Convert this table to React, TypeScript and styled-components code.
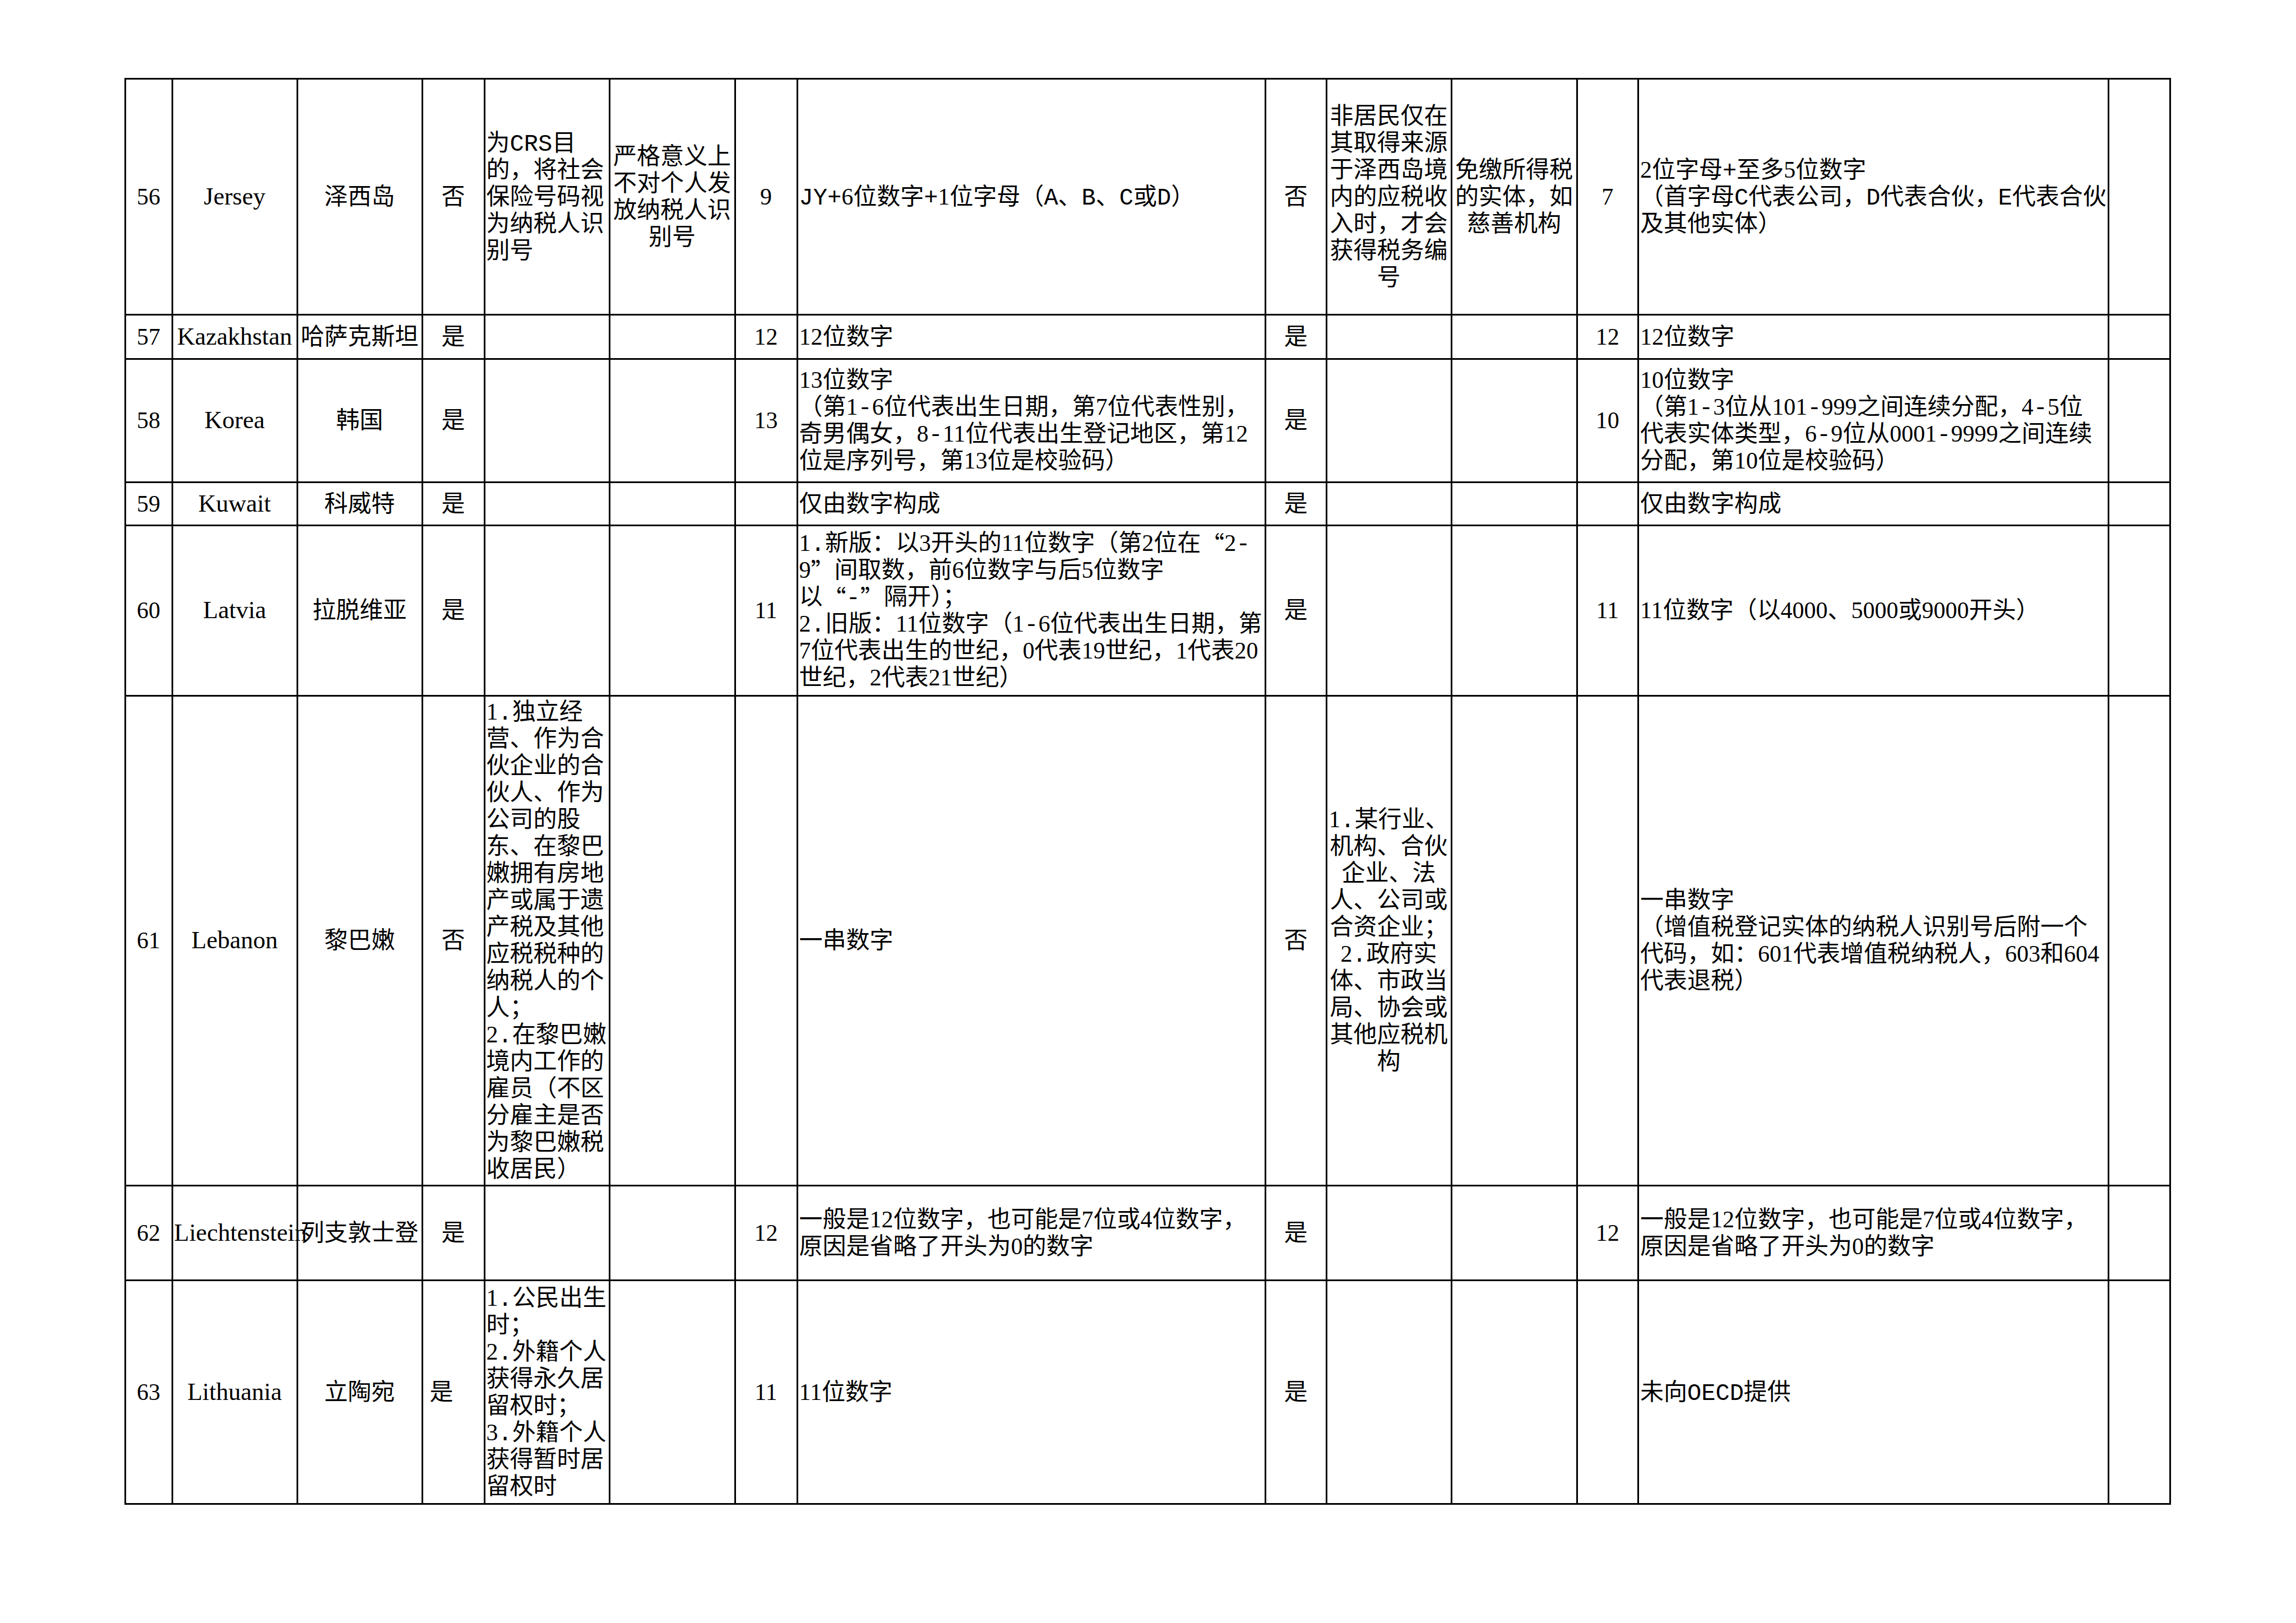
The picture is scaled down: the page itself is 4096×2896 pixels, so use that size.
import styled, { createGlobalStyle } from 'styled-components';

type Align = 'left' | 'center';

type Special = {
  lines: string[];
  front?: boolean;
  padRight?: number;
};

type Entry = string | string[] | Special;

type Row = {
  height: number;
  cells: Entry[];
};

const RULE = 3;
const LINE_H = 48;

// widths between grid line centres, page px
const COL_WIDTHS = [84, 223, 223, 111, 223, 224, 111, 835.5, 108.5, 223, 224, 109.5, 838.5, 110];
const COL_ALIGN: Align[] = [
  'center', 'center', 'center', 'center', 'left', 'center', 'center',
  'left', 'center', 'center', 'center', 'center', 'left', 'center',
];
const NAME_COL = 1;

const ROWS: Row[] = [
  {
    height: 421,
    cells: [
      '56',
      'Jersey',
      '泽西岛',
      '否',
      ['为CRS目', '的，将社会', '保险号码视', '为纳税人识', '别号'],
      ['严格意义上', '不对个人发', '放纳税人识', '别号'],
      '9',
      'JY+6位数字+1位字母（A、B、C或D）',
      '否',
      ['非居民仅在', '其取得来源', '于泽西岛境', '内的应税收', '入时，才会', '获得税务编', '号'],
      ['免缴所得税', '的实体，如', '慈善机构'],
      '7',
      ['2位字母+至多5位数字', '（首字母C代表公司，D代表合伙，E代表合伙', '及其他实体）'],
      '',
    ],
  },
  {
    height: 79,
    cells: ['57', 'Kazakhstan', '哈萨克斯坦', '是', '', '', '12', '12位数字', '是', '', '', '12', '12位数字', ''],
  },
  {
    height: 220,
    cells: [
      '58',
      'Korea',
      '韩国',
      '是',
      '',
      '',
      '13',
      ['13位数字', '（第1-6位代表出生日期，第7位代表性别，', '奇男偶女，8-11位代表出生登记地区，第12', '位是序列号，第13位是校验码）'],
      '是',
      '',
      '',
      '10',
      ['10位数字', '（第1-3位从101-999之间连续分配，4-5位', '代表实体类型，6-9位从0001-9999之间连续', '分配，第10位是校验码）'],
      '',
    ],
  },
  {
    height: 77,
    cells: ['59', 'Kuwait', '科威特', '是', '', '', '', '仅由数字构成', '是', '', '', '', '仅由数字构成', ''],
  },
  {
    height: 304,
    cells: [
      '60',
      'Latvia',
      '拉脱维亚',
      '是',
      '',
      '',
      '11',
      [
        '1.新版：以3开头的11位数字（第2位在“2-',
        '9”间取数，前6位数字与后5位数字',
        '以“-”隔开）；',
        '2.旧版：11位数字（1-6位代表出生日期，第',
        '7位代表出生的世纪，0代表19世纪，1代表20',
        '世纪，2代表21世纪）',
      ],
      '是',
      '',
      '',
      '11',
      '11位数字（以4000、5000或9000开头）',
      '',
    ],
  },
  {
    height: 874,
    cells: [
      '61',
      'Lebanon',
      '黎巴嫩',
      '否',
      [
        '1.独立经', '营、作为合', '伙企业的合', '伙人、作为', '公司的股', '东、在黎巴',
        '嫩拥有房地', '产或属于遗', '产税及其他', '应税税种的', '纳税人的个', '人；',
        '2.在黎巴嫩', '境内工作的', '雇员（不区', '分雇主是否', '为黎巴嫩税', '收居民）',
      ],
      '',
      '',
      '一串数字',
      '否',
      ['1.某行业、', '机构、合伙', '企业、法', '人、公司或', '合资企业；', '2.政府实', '体、市政当', '局、协会或', '其他应税机', '构'],
      '',
      '',
      ['一串数字', '（增值税登记实体的纳税人识别号后附一个', '代码，如：601代表增值税纳税人，603和604', '代表退税）'],
      '',
    ],
  },
  {
    height: 169,
    cells: [
      '62',
      { lines: ['Liechtenstein'], front: true },
      '列支敦士登',
      '是',
      '',
      '',
      '12',
      ['一般是12位数字，也可能是7位或4位数字，', '原因是省略了开头为0的数字'],
      '是',
      '',
      '',
      '12',
      ['一般是12位数字，也可能是7位或4位数字，', '原因是省略了开头为0的数字'],
      '',
    ],
  },
  {
    height: 399,
    cells: [
      '63',
      'Lithuania',
      '立陶宛',
      { lines: ['是'], padRight: 44 },
      ['1.公民出生', '时；', '2.外籍个人', '获得永久居', '留权时；', '3.外籍个人', '获得暂时居', '留权时'],
      '',
      '11',
      '11位数字',
      '是',
      '',
      '',
      '',
      '未向OECD提供',
      '',
    ],
  },
];

const GlobalStyle = createGlobalStyle`
  html, body {
    margin: 0;
    padding: 0;
    background: #fff;
  }
  body {
    width: 4096px;
    height: 2896px;
    overflow: hidden;
  }
`;

const Page = styled.div`
  padding: 138.5px 0 0 221.5px;
`;

const Sheet = styled.div<{ $rows: number[] }>`
  display: grid;
  width: max-content;
  grid-template-columns: ${COL_WIDTHS.map((w) => `${w - RULE}px`).join(' ')};
  grid-template-rows: ${(props) => props.$rows.map((h) => `${h - RULE}px`).join(' ')};
  gap: ${RULE}px;
  padding: ${RULE}px;
  background: #000;
  color: #000;
  font-family: 'Liberation Serif', 'Noto Sans CJK SC', serif;
  font-size: 42px;
`;

const Cell = styled.div<{ $align: Align; $latin: boolean; $front: boolean; $padRight: number }>`
  display: flex;
  flex-direction: column;
  justify-content: center;
  align-items: ${(props) => (props.$align === 'left' ? 'flex-start' : 'safe center')};
  min-width: 0;
  padding: 0 ${(props) => props.$padRight}px 0 2px;
  background: #fff;
  font-size: ${(props) => (props.$latin ? 44 : 42)}px;
  z-index: ${(props) => (props.$front ? 1 : 'auto')};
`;

const Line = styled.div`
  height: ${LINE_H}px;
  line-height: ${LINE_H}px;
  white-space: nowrap;
`;

// full-width quotation marks
const Quote = styled.span`
  display: inline-block;
  height: ${LINE_H}px;
  line-height: ${LINE_H}px;
  vertical-align: top;
  font-family: 'Noto Sans CJK SC', sans-serif;
`;

// half-width letters inside the Chinese texts
const Mono = styled.span`
  font-family: 'Liberation Mono', monospace;
`;

const MONO_RUN = /^[A-Za-z.+\-]+$/;

const renderText = (text: string, plain: boolean) => {
  if (plain) return text;
  return text.split(/([“”]|[A-Za-z.+\-]+)/).map((part, i) => {
    if (part === '“' || part === '”') return <Quote key={i}>{part}</Quote>;
    if (MONO_RUN.test(part)) return <Mono key={i}>{part}</Mono>;
    return part;
  });
};

const toSpecial = (entry: Entry): Special => {
  if (typeof entry === 'string') return { lines: entry ? [entry] : [] };
  if (Array.isArray(entry)) return { lines: entry };
  return entry;
};

const App = (): JSX.Element => {
  return (
    <Page>
      <GlobalStyle />
      <Sheet $rows={ROWS.map((row) => row.height)}>
        {ROWS.flatMap((row, r) =>
          row.cells.map((entry, c) => {
            const cell = toSpecial(entry);
            return (
              <Cell
                key={`${r}-${c}`}
                $align={COL_ALIGN[c]}
                $latin={c === NAME_COL}
                $front={!!cell.front}
                $padRight={cell.padRight ?? 2}
              >
                {cell.lines.map((text, i) => (
                  <Line key={i}>{renderText(text, c === NAME_COL)}</Line>
                ))}
              </Cell>
            );
          })
        )}
      </Sheet>
    </Page>
  );
};

export default App;
